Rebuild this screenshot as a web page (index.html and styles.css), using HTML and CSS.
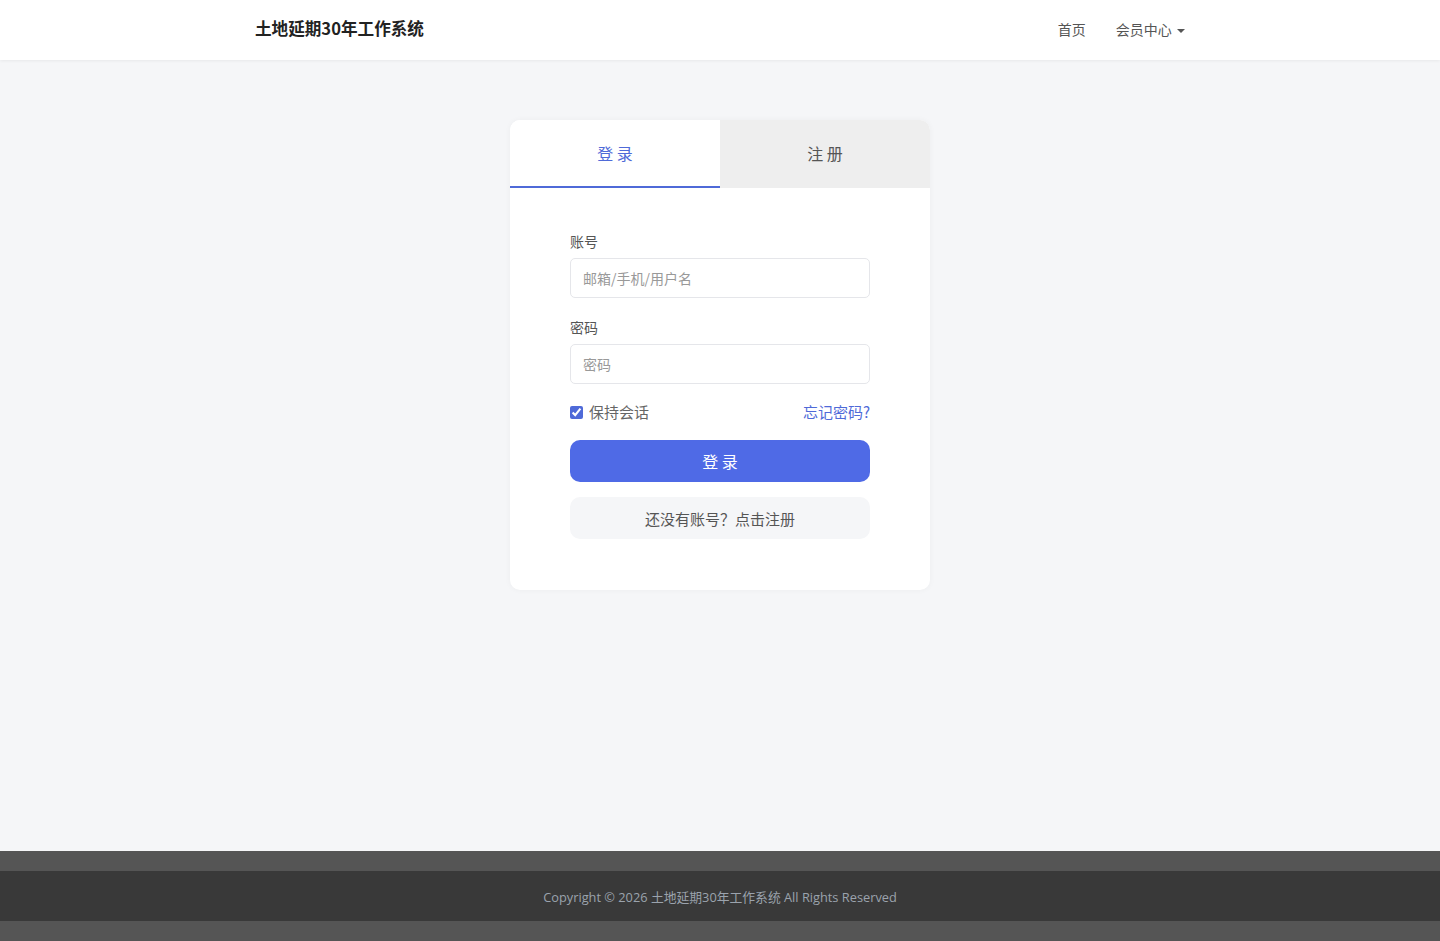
FILE: index.html
```html
<!DOCTYPE html>
<html lang="zh-CN">
<head>
    <meta charset="UTF-8">
    <meta name="viewport" content="width=device-width, initial-scale=1.0">
    <title>会员登录 - 土地延期30年工作系统</title>
    <link rel="stylesheet" href="styles.css">
</head>
<body>
    <header class="navbar">
        <div class="container nav-inner">
            <a class="brand" href="#">土地延期30年工作系统</a>
            <ul class="nav-links">
                <li><a href="#">首页</a></li>
                <li><a href="#">会员中心 <span class="caret"></span></a></li>
            </ul>
        </div>
    </header>

    <main class="main">
        <div class="login-card">
            <div class="tabs">
                <a class="tab active" href="#">登 录</a>
                <a class="tab" href="#">注 册</a>
            </div>

            <form class="login-form">
                <div class="form-group">
                    <label for="account">账号</label>
                    <input type="text" id="account" placeholder="邮箱/手机/用户名">
                </div>

                <div class="form-group">
                    <label for="password">密码</label>
                    <input type="password" id="password" placeholder="密码">
                </div>

                <div class="form-row">
                    <label class="keep"><input type="checkbox" checked> 保持会话</label>
                    <a class="forgot" href="#">忘记密码?</a>
                </div>

                <button type="submit" class="btn-login">登 录</button>
                <a class="btn-register" href="#">还没有账号？点击注册</a>
            </form>
        </div>
    </main>

    <footer class="footer">
        <div class="footer-inner">
            Copyright © 2026 土地延期30年工作系统 All Rights Reserved
        </div>
    </footer>
</body>
</html>
```

FILE: styles.css
```css
* {
    box-sizing: border-box;
}

body {
    margin: 0;
    font-family: "Noto Sans CJK SC", "Noto Sans", sans-serif;
    font-size: 14px;
    color: #333;
    background-color: #f5f6f8;
    min-height: 941px;
    display: flex;
    flex-direction: column;
}

a {
    text-decoration: none;
}

.container {
    width: 960px;
    margin: 0 auto;
    padding: 0 15px;
}

.navbar {
    background: #fff;
    height: 60px;
    box-shadow: 0 1px 3px rgba(0,0,0,0.06);
}

.nav-inner {
    display: flex;
    justify-content: space-between;
    align-items: center;
    height: 60px;
}

.brand {
    font-size: 16.6px;
    font-weight: bold;
    color: #222;
    margin-top: -5px;
}

.nav-links {
    list-style: none;
    margin: -2px 0 0;
    padding: 0;
    display: flex;
    gap: 30px;
}

.nav-links a {
    color: #555;
    font-size: 14px;
}

.caret {
    display: inline-block;
    width: 0;
    height: 0;
    border-top: 4px solid #555;
    border-left: 4px solid transparent;
    border-right: 4px solid transparent;
    vertical-align: middle;
    margin-left: 2px;
}

.main {
    flex: 1;
    padding-top: 60px;
}

.login-card {
    width: 420px;
    margin: 0 auto;
    background: #fff;
    border-radius: 10px;
    overflow: hidden;
    box-shadow: 0 0 6px rgba(0,0,0,0.04);
}

.tabs {
    display: flex;
    height: 68px;
}

.tab {
    flex: 1;
    display: flex;
    align-items: center;
    justify-content: center;
    font-size: 16px;
    color: #555;
    background: #eee;
    padding-bottom: 2px;
}

.tab.active {
    color: #4f6ad8;
    background: #fff;
    border-bottom: 2px solid #4f6ad8;
    padding-bottom: 0;
}

.login-form {
    padding: 43px 60px 51px;
}

.form-group {
    margin-bottom: 19px;
}

.form-group label {
    display: block;
    font-size: 14px;
    color: #555;
    margin-bottom: 7px;
    line-height: 20px;
}

.form-group input {
    width: 100%;
    height: 40px;
    padding: 0 12px;
    border: 1px solid #e5e6ea;
    border-radius: 5px;
    font-family: inherit;
    font-size: 14px;
    color: #333;
}

.form-group input::placeholder {
    color: #999;
}

.form-row {
    display: flex;
    justify-content: space-between;
    align-items: center;
    margin-top: -3px;
    margin-bottom: 16px;
    line-height: 24px;
}

.keep {
    display: flex;
    align-items: center;
    gap: 6px;
    font-size: 15px;
    color: #666;
}

.keep input {
    margin: 0;
    width: 13px;
    height: 13px;
    accent-color: #4f6ad8;
}

.forgot {
    color: #4f6ad8;
    font-size: 15px;
}

.btn-login {
    display: block;
    width: 100%;
    height: 42px;
    border: none;
    border-radius: 10px;
    background-color: #4f6ae6;
    color: #fff;
    font-family: inherit;
    font-size: 16px;
    cursor: pointer;
}

.btn-register {
    display: flex;
    align-items: center;
    justify-content: center;
    height: 42px;
    margin-top: 15px;
    border-radius: 10px;
    background: #f5f6f8;
    color: #555;
    font-size: 15px;
}

.footer {
    background: #555;
    padding: 20px 0;
}

.footer-inner {
    background: #393939;
    height: 50px;
    display: flex;
    align-items: center;
    justify-content: center;
    color: #9ba3ad;
    font-family: "Open Sans", "Noto Sans CJK SC", sans-serif;
    font-size: 12.8px;
}
```
